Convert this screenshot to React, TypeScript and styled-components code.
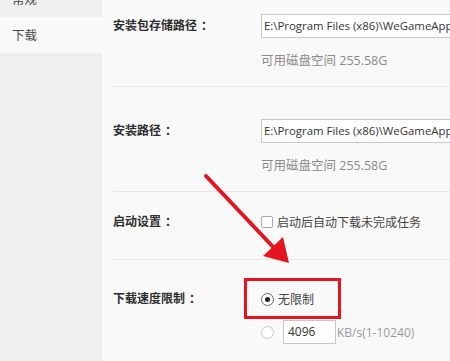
import React from "react";
import styled, { createGlobalStyle } from "styled-components";

const Global = createGlobalStyle`
  html, body { margin: 0; padding: 0; background: #f9f9f9; overflow: hidden; }
  * { box-sizing: border-box; }
`;

const FONT = `"Open Sans", "Noto Sans CJK SC", sans-serif`;

const Window = styled.div`
  position: relative;
  width: 450px;
  height: 361px;
  overflow: hidden;
  display: flex;
  font-family: ${FONT};
  font-size: 12.5px;
  color: #333;
  background: #f9f9f9;
`;

const Sidebar = styled.nav`
  width: 102px;
  flex: none;
  background: #efefef;
  display: flex;
  flex-direction: column;
  margin-top: -19px;
`;

const NavItem = styled.div<{ $active?: boolean }>`
  height: 36px;
  line-height: 37px;
  padding-left: 12px;
  font-size: 12.5px;
  color: #4a4a4a;
  background: ${(p) => (p.$active ? "#f9f9f9" : "transparent")};
`;

const Main = styled.main`
  flex: 1;
  min-width: 0;
  padding-left: 11px;
  margin-top: -19px;
  display: flex;
  flex-direction: column;
`;

const Section = styled.section<{ $top: number; $bottom: number }>`
  display: flex;
  align-items: flex-start;
  padding-top: ${(p) => p.$top}px;
  padding-bottom: ${(p) => p.$bottom}px;
  border-bottom: 1px solid #e6e6e6;
`;

const LastSection = styled(Section)`
  border-bottom: none;
`;

const Label = styled.div`
  width: 148px;
  flex: none;
  line-height: 24px;
  font-weight: bold;
  font-size: 12px;
  color: #2e2e2e;
  white-space: nowrap;
`;

const Colon = styled.span`
  margin-left: 4px;
`;

const Controls = styled.div`
  display: flex;
  flex-direction: column;
  min-width: 0;
`;

const PathInput = styled.div`
  width: 260px;
  height: 24px;
  line-height: 22px;
  border: 1px solid #c8c8c8;
  background: #fff;
  padding-left: 2px;
  font-size: 11.4px;
  color: #333;
  white-space: nowrap;
  overflow: hidden;
`;

const Note = styled.div`
  margin-top: 14px;
  line-height: 18px;
  font-size: 12.5px;
  color: #8a8a8a;
  white-space: nowrap;
`;

const OptionRow = styled.label`
  position: relative;
  display: flex;
  align-items: center;
  height: 24px;
  gap: 4px;
  white-space: nowrap;
  color: #444;
  font-size: 12px;
`;

const Check = styled.span`
  width: 12px;
  height: 12px;
  flex: none;
  border: 1px solid #a9a9a9;
  border-radius: 2px;
  background: #fff;
`;

const RadioGroup = styled.div`
  display: flex;
  flex-direction: column;
  gap: 9px;
`;

const Radio = styled.span<{ $on?: boolean }>`
  width: 13px;
  height: 13px;
  flex: none;
  border-radius: 50%;
  border: 1px solid ${(p) => (p.$on ? "#6a6a6a" : "#c6c6c6")};
  background: #fff;
  display: flex;
  align-items: center;
  justify-content: center;
  &::after {
    content: "";
    display: ${(p) => (p.$on ? "block" : "none")};
    width: 5px;
    height: 5px;
    border-radius: 50%;
    background: #222;
  }
`;

const SpeedInput = styled.div`
  width: 53px;
  height: 24px;
  line-height: 22px;
  margin-left: 5px;
  border: 1px solid #c8c8c8;
  background: #fff;
  padding-left: 4px;
  color: #333;
  font-size: 12px;
`;

const Unit = styled.span`
  margin-left: -3px;
  color: #9a9a9a;
  font-size: 12px;
`;

const Highlight = styled.div`
  position: absolute;
  left: -17px;
  top: -9px;
  width: 97px;
  height: 41px;
  border: 3px solid #e5141e;
  pointer-events: none;
`;

const ArrowLayer = styled.svg`
  position: absolute;
  left: 0;
  top: 0;
  width: 450px;
  height: 361px;
  pointer-events: none;
`;

export default function App() {
  return (
    <>
      <Global />
      <Window>
        <Sidebar>
          <NavItem>常规</NavItem>
          <NavItem $active>下载</NavItem>
        </Sidebar>
        <Main>
          <Section $top={33} $bottom={16}>
            <Label>安装包存储路径<Colon>：</Colon></Label>
            <Controls>
              <PathInput>E:\Program Files (x86)\WeGameApps</PathInput>
              <Note>可用磁盘空间 255.58G</Note>
            </Controls>
          </Section>
          <Section $top={32} $bottom={16}>
            <Label>安装路径<Colon>：</Colon></Label>
            <Controls>
              <PathInput>E:\Program Files (x86)\WeGameApps</PathInput>
              <Note>可用磁盘空间 255.58G</Note>
            </Controls>
          </Section>
          <Section $top={18} $bottom={25}>
            <Label>启动设置<Colon>：</Colon></Label>
            <Controls>
              <OptionRow>
                <Check />
                启动后自动下载未完成任务
              </OptionRow>
            </Controls>
          </Section>
          <LastSection $top={27} $bottom={0}>
            <Label>下载速度限制<Colon>：</Colon></Label>
            <RadioGroup>
              <OptionRow>
                <Radio $on />
                无限制
                <Highlight />
              </OptionRow>
              <OptionRow>
                <Radio />
                <SpeedInput>4096</SpeedInput>
                <Unit>KB/s(1-10240)</Unit>
              </OptionRow>
            </RadioGroup>
          </LastSection>
        </Main>
        <ArrowLayer viewBox="0 0 450 361">
          <line x1="206" y1="176" x2="276" y2="250" stroke="#e5141e" strokeWidth="4" strokeLinecap="round" />
          <polygon points="289,263 263,256 283,237" fill="#e5141e" />
        </ArrowLayer>
      </Window>
    </>
  );
}
